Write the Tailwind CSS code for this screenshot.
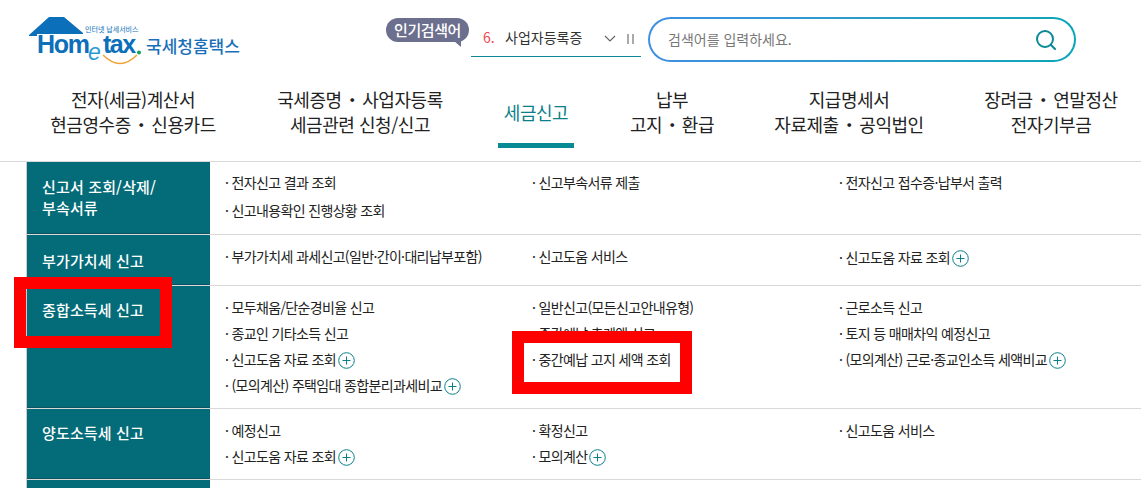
<!DOCTYPE html>
<html lang="ko">
<head>
<meta charset="utf-8">
<script src="https://cdn.jsdelivr.net/npm/@tailwindcss/browser@4"></script>
</head>
<body class="relative h-[488px] w-[1141px] overflow-hidden bg-white font-['Noto_Sans_CJK_KR','Noto_Sans',sans-serif] text-[#222]">
<header class="h-[162px] border-b border-[#d9d9d9]">
  <div class="flex h-[76px] items-start">
    <!-- logo -->
    <div class="relative ml-[28px] mt-[16px] h-[52px] w-[214px] shrink-0">
      <svg class="absolute left-0 top-0" width="140" height="52" viewBox="0 0 140 52">
        <path d="M1 19 L21 1 L36 1 L55 17 L55 18 L9 18 L9 20 L1 20 Z" fill="#0b6fba"/>
        <path d="M75 39 Q92 56 109 39" fill="none" stroke="#f0a43a" stroke-width="1.6"/>
        <circle cx="111" cy="36.5" r="2" fill="#12a05a"/>
      </svg>
      <span class="absolute left-[57px] top-[8px] text-[7px] leading-[10px] text-[#0b6fba] whitespace-nowrap">인터넷 납세서비스</span>
      <span class="absolute left-[9px] top-[18px] font-['Liberation_Sans',sans-serif] text-[25px] font-bold leading-[20px] tracking-[-1.3px] text-[#0b6fba]">Hom</span>
      <span class="absolute left-[60px] top-[26px] font-['Liberation_Sans',sans-serif] text-[23px] italic leading-[20px] text-[#2a9ad6]">e</span>
      <span class="absolute left-[75px] top-[18px] font-['Liberation_Sans',sans-serif] text-[25px] font-bold leading-[20px] tracking-[-1.5px] text-[#0b6fba]">tax</span>
      <span class="absolute left-[118px] top-[18px] text-[17px] font-medium leading-[24px] text-[#1a6fb8] whitespace-nowrap">국세청홈택스</span>
    </div>
    <!-- popular -->
    <div class="relative ml-[144px] mt-[18px] flex h-[24px] w-[83px] shrink-0 items-center justify-center rounded-full bg-[#6c6f8d] text-[15px] font-medium tracking-[-0.45px] text-white">
      인기검색어
      <span class="absolute bottom-[-5px] right-[8px] h-0 w-0 border-l-[7px] border-t-[6px] border-l-transparent border-t-[#6c6f8d]"></span>
    </div>
    <!-- ticker -->
    <div class="ml-[2px] mt-[18px] flex h-[39px] w-[170px] shrink-0 items-center border-b border-[#0b8a96] pl-[12px] text-[14px]">
      <span class="w-[22px] text-[#f0484e]">6.</span>
      <span class="w-[99px] text-[#333]">사업자등록증</span>
      <svg width="12" height="7" viewBox="0 0 12 7" class="mt-[2px]"><path d="M1 1l5 5 5-5" fill="none" stroke="#666" stroke-width="1.2"/></svg>
      <span class="ml-[11px] mt-[3px] flex gap-[3px]"><i class="block h-[10px] w-[2px] bg-[#aaa]"></i><i class="block h-[10px] w-[2px] bg-[#aaa]"></i></span>
    </div>
    <!-- search -->
    <div class="ml-[7px] mt-[17px] h-[45px] w-[428px] shrink-0 rounded-full bg-linear-to-r from-[#3f8fe2] to-[#07a6b6] p-[2px]">
      <div class="flex h-full items-center justify-between rounded-full bg-white pl-[18px] pr-[17px]">
        <span class="text-[14px] text-[#777]">검색어를 입력하세요.</span>
        <svg width="22" height="22" viewBox="0 0 22 22"><circle cx="10" cy="10" r="8" fill="none" stroke="#0b8a96" stroke-width="2"/><path d="M16 16l4 4" stroke="#0b8a96" stroke-width="2.2" stroke-linecap="round"/></svg>
      </div>
    </div>
  </div>
  <nav class="ml-[20px] flex h-[85px] text-center text-[18px] leading-[25px] tracking-[-0.45px] text-[#222]">
    <a class="w-[226px] shrink-0 pt-[11px]">전자(세금)계산서<br>현금영수증<span class="mx-[1.5px]">・</span>신용카드</a>
    <a class="w-[228px] shrink-0 pt-[11px]">국세증명<span class="mx-[1.5px]">・</span>사업자등록<br>세금관련 신청/신고</a>
    <a class="relative w-[124px] shrink-0 pt-[24px] text-[#0b7f8a]">세금신고<span class="absolute bottom-[13px] left-[24px] h-[5px] w-[76px] bg-[#078a94]"></span></a>
    <a class="w-[148px] shrink-0 pt-[11px]">납부<br>고지<span class="mx-[1px]">・</span>환급</a>
    <a class="w-[206px] shrink-0 pt-[11px]">지급명세서<br>자료제출<span class="mx-[1.5px]">・</span>공익법인</a>
    <a class="w-[198px] shrink-0 pt-[11px]">장려금<span class="mx-[1.5px]">・</span>연말정산<br>전자기부금</a>
  </nav>
</header>

<main class="ml-[26px] border-l border-[#ccc] text-[14px] tracking-[-0.65px]">
  <!-- row 1 -->
  <section class="flex h-[73px] border-b border-[#d9d9d9]">
    <h3 class="w-[183px] shrink-0 border-b border-[#0c5560] bg-[#046c79] px-[15px] pt-[14px] text-[15px] font-medium leading-[21px] tracking-[0.15px] text-white">신고서 조회/삭제/<br>부속서류</h3>
    <ul class="grid flex-1 grid-cols-[307px_307px_1fr] content-start gap-y-[10px] pl-[15px] pt-[11px] leading-[18px]">
      <li>· 전자신고 결과 조회</li><li>· 신고부속서류 제출</li><li>· 전자신고 접수증·납부서 출력</li>
      <li>· 신고내용확인 진행상황 조회</li>
    </ul>
  </section>
  <!-- row 2 -->
  <section class="flex h-[51px] border-b border-[#d9d9d9]">
    <h3 class="w-[183px] shrink-0 border-b border-[#0c5560] bg-[#046c79] px-[15px] pt-[15px] text-[15px] font-medium leading-[21px] tracking-[0.15px] text-white">부가가치세 신고</h3>
    <ul class="grid flex-1 grid-cols-[307px_307px_1fr] content-start pl-[15px] pt-[12px] leading-[18px]">
      <li>· 부가가치세 과세신고(일반·간이·대리납부포함)</li><li>· 신고도움 서비스</li>
      <li class="flex items-center whitespace-pre">· 신고도움 자료 조회<svg class="ml-[2px] mt-[3px]" width="17" height="17" viewBox="0 0 17 17"><circle cx="8.5" cy="8.5" r="7.8" fill="none" stroke="#0b7f8a"/><path d="M8.5 4.5v8M4.5 8.5h8" stroke="#0b7f8a"/></svg></li>
    </ul>
  </section>
  <!-- row 3 -->
  <section class="flex h-[123px] border-b border-[#d9d9d9]">
    <h3 class="w-[183px] shrink-0 border-b border-[#0c5560] bg-[#046c79] px-[15px] pt-[13px] text-[15px] font-medium leading-[21px] tracking-[0.15px] text-white">종합소득세 신고</h3>
    <ul class="grid flex-1 grid-cols-[307px_307px_1fr] content-start gap-y-[8px] pl-[15px] pt-[12px] leading-[18px]">
      <li>· 모두채움/단순경비율 신고</li><li>· 일반신고(모든신고안내유형)</li><li>· 근로소득 신고</li>
      <li>· 종교인 기타소득 신고</li><li>· 중간예납 추계액 신고</li><li>· 토지 등 매매차익 예정신고</li>
      <li class="flex h-[18px] items-center whitespace-pre">· 신고도움 자료 조회<svg class="ml-[2px] mt-[3px]" width="17" height="17" viewBox="0 0 17 17"><circle cx="8.5" cy="8.5" r="7.8" fill="none" stroke="#0b7f8a"/><path d="M8.5 4.5v8M4.5 8.5h8" stroke="#0b7f8a"/></svg></li>
      <li>· 중간예납 고지 세액 조회</li>
      <li class="flex h-[18px] items-center whitespace-pre">· (모의계산) 근로·종교인소득 세액비교<svg class="ml-[2px] mt-[3px]" width="17" height="17" viewBox="0 0 17 17"><circle cx="8.5" cy="8.5" r="7.8" fill="none" stroke="#0b7f8a"/><path d="M8.5 4.5v8M4.5 8.5h8" stroke="#0b7f8a"/></svg></li>
      <li class="col-span-3 flex h-[18px] items-center whitespace-pre">· (모의계산) 주택임대 종합분리과세비교<svg class="ml-[2px] mt-[3px]" width="17" height="17" viewBox="0 0 17 17"><circle cx="8.5" cy="8.5" r="7.8" fill="none" stroke="#0b7f8a"/><path d="M8.5 4.5v8M4.5 8.5h8" stroke="#0b7f8a"/></svg></li>
    </ul>
  </section>
  <!-- row 4 -->
  <section class="flex h-[71px] border-b border-[#d9d9d9]">
    <h3 class="w-[183px] shrink-0 border-b border-[#0c5560] bg-[#046c79] px-[15px] pt-[13px] text-[15px] font-medium leading-[21px] tracking-[0.15px] text-white">양도소득세 신고</h3>
    <ul class="grid flex-1 grid-cols-[307px_307px_1fr] content-start gap-y-[8px] pl-[15px] pt-[12px] leading-[18px]">
      <li>· 예정신고</li><li>· 확정신고</li><li>· 신고도움 서비스</li>
      <li class="flex h-[18px] items-center whitespace-pre">· 신고도움 자료 조회<svg class="ml-[2px] mt-[3px]" width="17" height="17" viewBox="0 0 17 17"><circle cx="8.5" cy="8.5" r="7.8" fill="none" stroke="#0b7f8a"/><path d="M8.5 4.5v8M4.5 8.5h8" stroke="#0b7f8a"/></svg></li>
      <li class="flex h-[18px] items-center whitespace-pre">· 모의계산<svg class="ml-[2px] mt-[3px]" width="17" height="17" viewBox="0 0 17 17"><circle cx="8.5" cy="8.5" r="7.8" fill="none" stroke="#0b7f8a"/><path d="M8.5 4.5v8M4.5 8.5h8" stroke="#0b7f8a"/></svg></li>
    </ul>
  </section>
  <section class="flex h-[20px]"><div class="w-[183px] shrink-0 bg-[#046c79]"></div></section>
</main>

<!-- red annotation boxes -->
<div class="absolute left-[14px] top-[277px] h-[71px] w-[158px] border-[12px] border-[#ff0000]"></div>
<div class="absolute left-[512px] top-[331px] h-[63px] w-[180px] border-[12px] border-[#ff0000]"></div>
</body>
</html>
